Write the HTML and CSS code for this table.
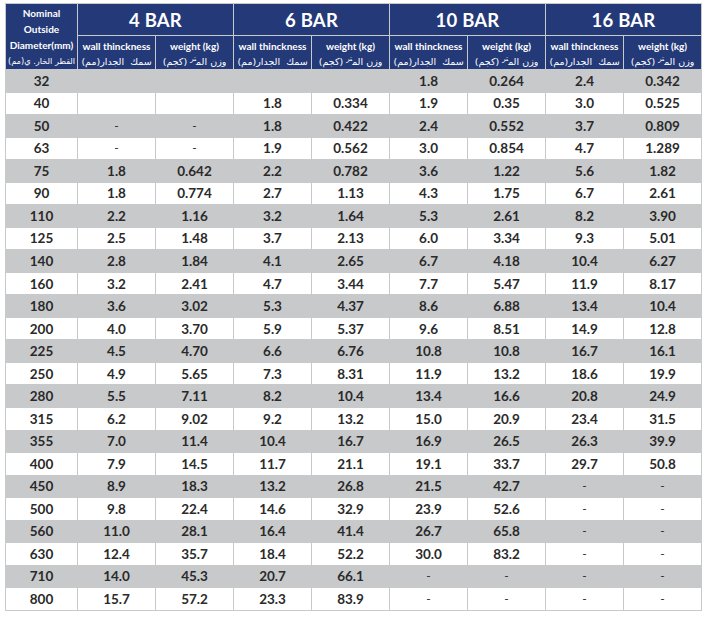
FILE: index.html
```html
<!DOCTYPE html>
<html lang="en">
<head>
<meta charset="utf-8">
<title>Pipe weights</title>
<link rel="stylesheet" href="styles.css">
</head>
<body>
<table class="spec">
  <colgroup>
    <col class="c-dia">
    <col class="c-val"><col class="c-val"><col class="c-val"><col class="c-val">
    <col class="c-val"><col class="c-val"><col class="c-val"><col class="c-val">
  </colgroup>
  <thead>
    <tr class="h-bar">
      <th rowspan="2" class="h-dia">
        <div class="dia-line">Nominal</div>
        <div class="dia-line">Outside</div>
        <div class="dia-line">Diameter(mm)</div>
        <div class="dia-line ar ar-dia" dir="rtl">القطر الخار. ي(مم)</div>
      </th>
      <th colspan="2">4 BAR</th>
      <th colspan="2">6 BAR</th>
      <th colspan="2">10 BAR</th>
      <th colspan="2">16 BAR</th>
    </tr>
    <tr class="h-sub">
      <th><div>wall thinckness</div><div class="ar" dir="rtl">سمك&nbsp; الجدار(مم)</div></th>
      <th><div>weight (kg)</div><div class="ar" dir="rtl">وزن الم<sup>تر</sup> (كجم)</div></th>
      <th><div>wall thinckness</div><div class="ar" dir="rtl">سمك&nbsp; الجدار(مم)</div></th>
      <th><div>weight (kg)</div><div class="ar" dir="rtl">وزن الم<sup>تر</sup> (كجم)</div></th>
      <th><div>wall thinckness</div><div class="ar" dir="rtl">سمك&nbsp; الجدار(مم)</div></th>
      <th><div>weight (kg)</div><div class="ar" dir="rtl">وزن الم<sup>تر</sup> (كجم)</div></th>
      <th><div>wall thinckness</div><div class="ar" dir="rtl">سمك&nbsp; الجدار(مم)</div></th>
      <th><div>weight (kg)</div><div class="ar" dir="rtl">وزن الم<sup>تر</sup> (كجم)</div></th>
    </tr>
  </thead>
  <tbody>
    <tr><td>32</td><td></td><td></td><td></td><td></td><td>1.8</td><td>0.264</td><td>2.4</td><td>0.342</td></tr>
    <tr><td>40</td><td></td><td></td><td>1.8</td><td>0.334</td><td>1.9</td><td>0.35</td><td>3.0</td><td>0.525</td></tr>
    <tr><td>50</td><td class="na">-</td><td class="na">-</td><td>1.8</td><td>0.422</td><td>2.4</td><td>0.552</td><td>3.7</td><td>0.809</td></tr>
    <tr><td>63</td><td class="na">-</td><td class="na">-</td><td>1.9</td><td>0.562</td><td>3.0</td><td>0.854</td><td>4.7</td><td>1.289</td></tr>
    <tr><td>75</td><td>1.8</td><td>0.642</td><td>2.2</td><td>0.782</td><td>3.6</td><td>1.22</td><td>5.6</td><td>1.82</td></tr>
    <tr><td>90</td><td>1.8</td><td>0.774</td><td>2.7</td><td>1.13</td><td>4.3</td><td>1.75</td><td>6.7</td><td>2.61</td></tr>
    <tr><td>110</td><td>2.2</td><td>1.16</td><td>3.2</td><td>1.64</td><td>5.3</td><td>2.61</td><td>8.2</td><td>3.90</td></tr>
    <tr><td>125</td><td>2.5</td><td>1.48</td><td>3.7</td><td>2.13</td><td>6.0</td><td>3.34</td><td>9.3</td><td>5.01</td></tr>
    <tr><td>140</td><td>2.8</td><td>1.84</td><td>4.1</td><td>2.65</td><td>6.7</td><td>4.18</td><td>10.4</td><td>6.27</td></tr>
    <tr><td>160</td><td>3.2</td><td>2.41</td><td>4.7</td><td>3.44</td><td>7.7</td><td>5.47</td><td>11.9</td><td>8.17</td></tr>
    <tr><td>180</td><td>3.6</td><td>3.02</td><td>5.3</td><td>4.37</td><td>8.6</td><td>6.88</td><td>13.4</td><td>10.4</td></tr>
    <tr><td>200</td><td>4.0</td><td>3.70</td><td>5.9</td><td>5.37</td><td>9.6</td><td>8.51</td><td>14.9</td><td>12.8</td></tr>
    <tr><td>225</td><td>4.5</td><td>4.70</td><td>6.6</td><td>6.76</td><td>10.8</td><td>10.8</td><td>16.7</td><td>16.1</td></tr>
    <tr><td>250</td><td>4.9</td><td>5.65</td><td>7.3</td><td>8.31</td><td>11.9</td><td>13.2</td><td>18.6</td><td>19.9</td></tr>
    <tr><td>280</td><td>5.5</td><td>7.11</td><td>8.2</td><td>10.4</td><td>13.4</td><td>16.6</td><td>20.8</td><td>24.9</td></tr>
    <tr><td>315</td><td>6.2</td><td>9.02</td><td>9.2</td><td>13.2</td><td>15.0</td><td>20.9</td><td>23.4</td><td>31.5</td></tr>
    <tr><td>355</td><td>7.0</td><td>11.4</td><td>10.4</td><td>16.7</td><td>16.9</td><td>26.5</td><td>26.3</td><td>39.9</td></tr>
    <tr><td>400</td><td>7.9</td><td>14.5</td><td>11.7</td><td>21.1</td><td>19.1</td><td>33.7</td><td>29.7</td><td>50.8</td></tr>
    <tr><td>450</td><td>8.9</td><td>18.3</td><td>13.2</td><td>26.8</td><td>21.5</td><td>42.7</td><td class="na">-</td><td class="na">-</td></tr>
    <tr><td>500</td><td>9.8</td><td>22.4</td><td>14.6</td><td>32.9</td><td>23.9</td><td>52.6</td><td class="na">-</td><td class="na">-</td></tr>
    <tr><td>560</td><td>11.0</td><td>28.1</td><td>16.4</td><td>41.4</td><td>26.7</td><td>65.8</td><td class="na">-</td><td class="na">-</td></tr>
    <tr><td>630</td><td>12.4</td><td>35.7</td><td>18.4</td><td>52.2</td><td>30.0</td><td>83.2</td><td class="na">-</td><td class="na">-</td></tr>
    <tr><td>710</td><td>14.0</td><td>45.3</td><td>20.7</td><td>66.1</td><td class="na">-</td><td class="na">-</td><td class="na">-</td><td class="na">-</td></tr>
    <tr><td>800</td><td>15.7</td><td>57.2</td><td>23.3</td><td>83.9</td><td class="na">-</td><td class="na">-</td><td class="na">-</td><td class="na">-</td></tr>
  </tbody>
</table>
</body>
</html>
```

FILE: styles.css
```css
html, body {
  margin: 0;
  padding: 0;
  background: #ffffff;
}

body {
  padding: 3px 0 0 5px;
  font-family: Lato, "DejaVu Sans", sans-serif;
}

.spec {
  border-collapse: collapse;
  table-layout: fixed;
  width: 697px;
  color: #2a2a2a;
}

.c-dia { width: 72px; }
.c-val { width: 78px; }

.spec th,
.spec td {
  border: 1px solid #c8c9cb;
  padding: 0;
  text-align: center;
  vertical-align: middle;
}

.spec thead th {
  background: #243978;
  color: #ffffff;
  font-weight: 700;
}

.h-bar { height: 32px; }
.h-bar th {
  font-size: 18.5px;
  letter-spacing: 0.2px;
}

.h-sub { height: 34px; }
.h-sub th {
  font-size: 10px;
  line-height: 15px;
  padding-top: 2px;
}

.h-bar .h-dia {
  font-size: 10px;
  line-height: 16px;
  letter-spacing: 0;
  padding-top: 1px;
}

.dia-line { white-space: nowrap; }

.spec thead .ar {
  font-family: "DejaVu Sans", sans-serif;
  font-weight: 400;
  font-size: 9.5px;
  white-space: nowrap;
}

.spec thead .ar-dia {
  font-size: 8.2px;
}

.ar sup {
  font-size: 7px;
  line-height: 0;
  vertical-align: 4px;
}

.spec tbody tr { height: 22.54px; }

.spec tbody td {
  font-size: 13.5px;
  font-weight: 700;
  line-height: 16px;
}

.spec tbody tr:nth-child(odd) td {
  background: #c8c9cb;
}

.spec tbody td.na {
  font-weight: 400;
  font-size: 12px;
}
```
